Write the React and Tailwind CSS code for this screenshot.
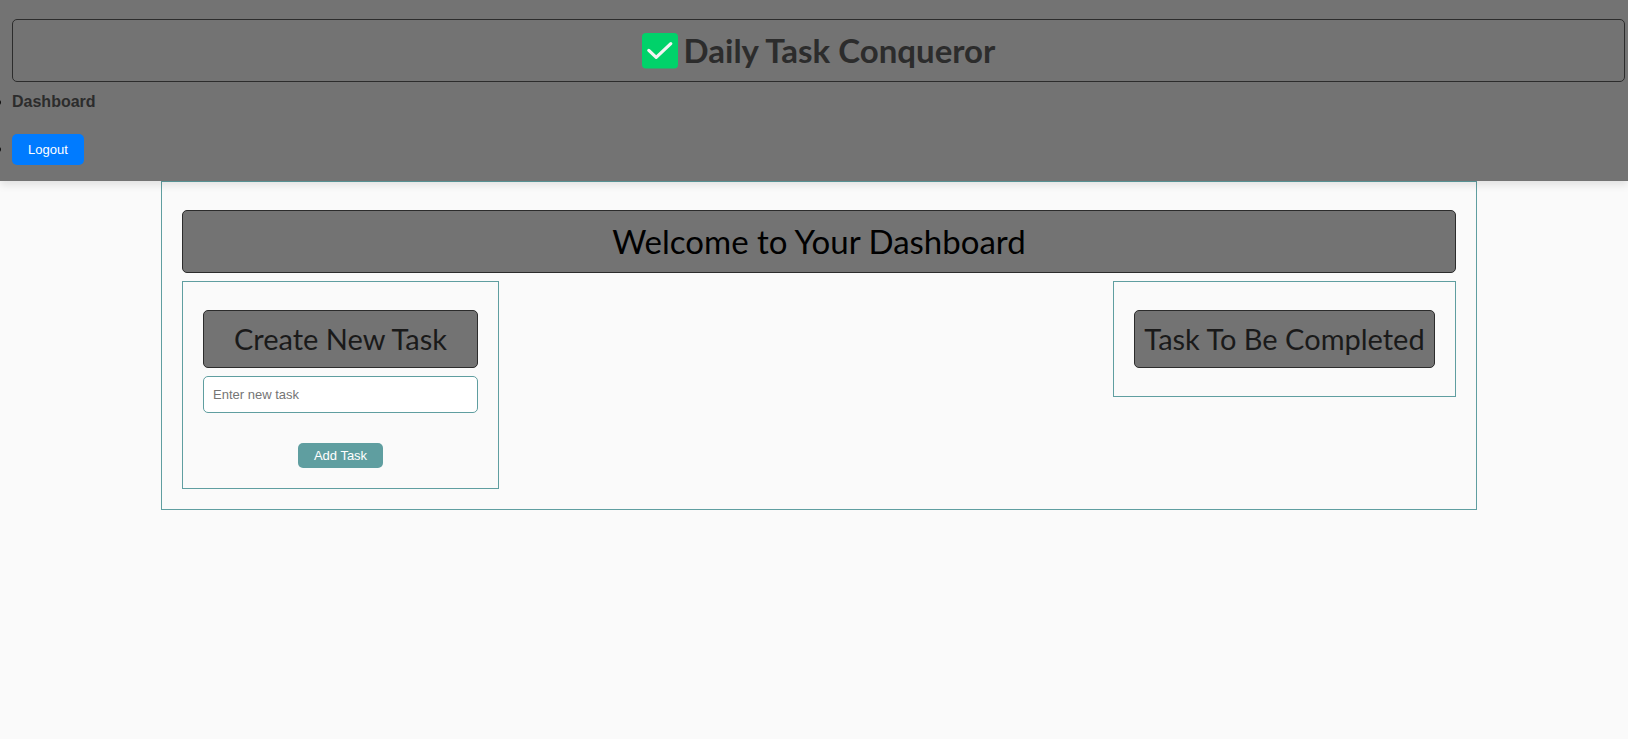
import { useState } from "react";

const titleBox =
  "my-2 rounded-[5px] border border-[#2c2c2c] bg-[#737373] text-center font-[Lato,sans-serif]";

function Header() {
  return (
    <header className="relative bg-[#737373] pt-[11px] pr-[3px] pb-4 pl-3 shadow-[0_4px_8px_rgba(0,0,0,0.1)]">
      <h1 className="my-2 flex items-center justify-center gap-1.5 rounded-[5px] border border-[#2c2c2c] font-[Lato,sans-serif] text-[33px] leading-[61px] font-bold text-[#2c2c2c]">
        <svg viewBox="0 0 36 36" className="h-9 w-9 shrink-0" aria-hidden="true">
          <rect width="36" height="35.5" rx="4" fill="#00d26a" />
          <path
            d="M6.8 17.4 L14.2 24.4 L28.8 10.6"
            fill="none"
            stroke="#f4f4f4"
            strokeWidth="3.2"
            strokeLinecap="round"
            strokeLinejoin="round"
          />
        </svg>
        Daily Task Conqueror
      </h1>
      <ul className="list-disc text-base leading-6 text-[#111111]">
        <li>
          <a href="#dashboard" className="font-bold text-[#2c2c2c]">
            Dashboard
          </a>
        </li>
        <li className="mt-5">
          <button
            type="button"
            className="h-[31px] rounded-[5px] bg-[#007bff] px-4 align-middle text-[13px] font-medium text-white"
          >
            Logout
          </button>
        </li>
      </ul>
    </header>
  );
}

function CreateTask() {
  const [task, setTask] = useState("");
  return (
    <section className="w-[317px] border border-[#5f9ea0] p-5">
      <h2 className={`${titleBox} text-[29px] leading-14 text-[#1a1a1a]`}>
        Create New Task
      </h2>
      <form className="flex flex-col items-center" onSubmit={(e) => e.preventDefault()}>
        <input
          type="text"
          aria-label="New task"
          placeholder="Enter new task"
          value={task}
          onChange={(e) => setTask(e.target.value)}
          className="h-[37px] w-full rounded-[5px] border border-[#5f9ea0] bg-white px-[9px] text-[13px] placeholder:text-[#757575]"
        />
        <button
          type="submit"
          className="mt-[30px] h-[25px] rounded-[5px] bg-[#5f9ea0] px-4 text-[13px] font-medium text-white"
        >
          Add Task
        </button>
      </form>
    </section>
  );
}

export default function App() {
  return (
    <div className="min-h-screen bg-[#fafafa] font-['Liberation_Sans',Arial,sans-serif]">
      <Header />
      <div className="pr-[151px] pl-[161px]">
        <main className="border border-[#5f9ea0] p-5">
          <h1 className={`${titleBox} text-[33px] leading-[61px] text-black`}>
            Welcome to Your Dashboard
          </h1>
          <div className="flex items-start justify-between">
            <CreateTask />
            <section className="w-[343px] border border-[#5f9ea0] p-5">
              <h2 className={`${titleBox} text-[29px] leading-14 whitespace-nowrap text-[#1a1a1a]`}>
                Task To Be Completed
              </h2>
            </section>
          </div>
        </main>
      </div>
    </div>
  );
}
